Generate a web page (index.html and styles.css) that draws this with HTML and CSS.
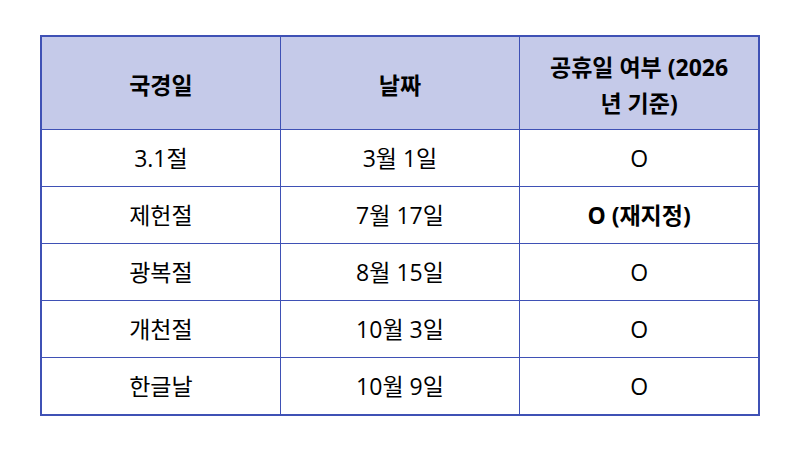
FILE: index.html
```html
<!DOCTYPE html>
<html lang="ko">
<head>
<meta charset="utf-8">
<link rel="stylesheet" href="styles.css">
</head>
<body>
<table class="holidays">
  <thead>
    <tr>
      <th>국경일</th>
      <th>날짜</th>
      <th class="wrap">공휴일 여부 (2026 년 기준)</th>
    </tr>
  </thead>
  <tbody>
    <tr><td>3.1절</td><td>3월 1일</td><td>O</td></tr>
    <tr><td>제헌절</td><td>7월 17일</td><td class="strong">O (재지정)</td></tr>
    <tr><td>광복절</td><td>8월 15일</td><td>O</td></tr>
    <tr><td>개천절</td><td>10월 3일</td><td>O</td></tr>
    <tr><td>한글날</td><td>10월 9일</td><td>O</td></tr>
  </tbody>
</table>
</body>
</html>
```
FILE: styles.css
```css
html, body {
  margin: 0;
  padding: 0;
  background: #ffffff;
}
body {
  padding: 35px 0 0 40px;
  font-family: "Open Sans", "Noto Sans CJK KR", sans-serif;
  color: #000000;
}
.holidays {
  border-collapse: collapse;
  width: 720px;
  border: 2px solid #3f51b5;
  table-layout: fixed;
}
.holidays th,
.holidays td {
  border: 1px solid #3f51b5;
  text-align: center;
  vertical-align: middle;
  font-size: 23px;
  padding: 0 18px;
}
.holidays th {
  background: #c5cae9;
  font-weight: 700;
  height: 88px;
  line-height: 36px;
  padding-top: 4px;
}
.holidays td {
  height: 56px;
  line-height: 28px;
  font-weight: 400;
}
.holidays td.strong {
  font-weight: 700;
}
```
